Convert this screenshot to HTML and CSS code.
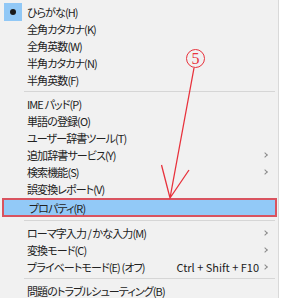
FILE: index.html
```html
<!DOCTYPE html>
<html lang="ja">

<head>
    <meta charset="UTF-8">
    <title>IME メニュー</title>
    <link rel="stylesheet" href="styles.css">
</head>

<body>

    <div class="menu">
        <div class="item">
            <span class="check"><span class="dot"></span></span>
            <span class="label">ひらがな(H)</span>
        </div>
        <div class="item"><span class="check"></span><span class="label">全角カタカナ(K)</span></div>
        <div class="item"><span class="check"></span><span class="label">全角英数(W)</span></div>
        <div class="item"><span class="check"></span><span class="label">半角カタカナ(N)</span></div>
        <div class="item"><span class="check"></span><span class="label">半角英数(F)</span></div>

        <div class="sep"></div>

        <div class="item"><span class="check"></span><span class="label">IME パッド(P)</span></div>
        <div class="item"><span class="check"></span><span class="label">単語の登録(O)</span></div>
        <div class="item"><span class="check"></span><span class="label">ユーザー辞書ツール(T)</span></div>
        <div class="item"><span class="check"></span><span class="label">追加辞書サービス(Y)</span><span class="more"></span></div>
        <div class="item"><span class="check"></span><span class="label">検索機能(S)</span><span class="more"></span></div>
        <div class="item"><span class="check"></span><span class="label">誤変換レポート(V)</span></div>
        <div class="item selected"><span class="check"></span><span class="label">プロパティ(R)</span></div>

        <div class="sep"></div>

        <div class="item"><span class="check"></span><span class="label">ローマ字入力 / かな入力(M)</span><span class="more"></span></div>
        <div class="item"><span class="check"></span><span class="label">変換モード(C)</span><span class="more"></span></div>
        <div class="item">
            <span class="check"></span><span class="label">プライベートモード(E) (オフ)</span>
            <span class="shortcut">Ctrl + Shift + F10</span><span class="more"></span>
        </div>

        <div class="sep"></div>

        <div class="item"><span class="check"></span><span class="label">問題のトラブルシューティング(B)</span></div>
    </div>

    <!-- annotation drawn over the menu -->
    <span class="callout">5</span>
    <svg class="arrow" width="282" height="300" viewBox="0 0 282 300">
        <path d="M194 68 L170 198 M161.5 165 L170 198 L189 170" fill="none" stroke="#e8323c" stroke-width="1.3" />
    </svg>

</body>

</html>
```

FILE: styles.css
```css
body {
    margin: 0;
    background: white;
    font-family: "Noto Sans CJK JP", "Noto Sans", sans-serif;
    position: relative;
}

.menu {
    width: 279px;
    height: 298px;
    padding-top: 3px;
    background: #f1f1f1;
    border-right: 1px solid #d9d9d9;
    box-sizing: border-box;
    display: flex;
    flex-direction: column;
    overflow: hidden;
}

.item {
    height: 17px;
    display: flex;
    align-items: center;
    font-size: 11px;
    color: #222;
    padding-right: 9px;
    flex-shrink: 0;
    white-space: nowrap;
}

.label {
    flex: 1;
    font-feature-settings: "palt" 1;
    letter-spacing: -0.9px;
}

.check {
    width: 27px;
    height: 17px;
    flex-shrink: 0;
    display: flex;
    align-items: center;
    padding-left: 4px;
    box-sizing: border-box;
}

.check .dot {
    width: 18px;
    height: 18px;
    background: #91c8f6;
    position: relative;
}

.check .dot::after {
    content: "";
    position: absolute;
    left: 6px;
    top: 6px;
    width: 6px;
    height: 6px;
    border-radius: 50%;
    background: #1a1a1a;
}

.shortcut {
    margin-right: 4px;
}

.more {
    flex-shrink: 0;
    border-right: 1px solid #8a8a8a;
    border-top: 1px solid #8a8a8a;
    width: 3px;
    height: 3px;
    transform: rotate(45deg);
    margin-right: 2px;
}

.selected {
    height: 19px;
    margin: 1px 1px 0 2px;
    background: #92c9f7;
    border: 2px solid #d9535f;
    box-sizing: border-box;
}

.selected .check {
    width: 25px;
}

.sep {
    height: 7px;
    flex-shrink: 0;
    display: flex;
    align-items: center;
    padding-left: 24px;
    padding-right: 3px;
}

.sep::after {
    content: "";
    flex: 1;
    height: 1px;
    background: #d6d6d6;
}

.callout {
    position: absolute;
    left: 186px;
    top: 49px;
    width: 17px;
    height: 17px;
    border: 1.3px solid #e8323c;
    border-radius: 50%;
    color: #e8323c;
    font-family: "Liberation Serif", serif;
    font-size: 16px;
    line-height: 17px;
    text-align: center;
}

.arrow {
    position: absolute;
    left: 0;
    top: 0;
}
```
